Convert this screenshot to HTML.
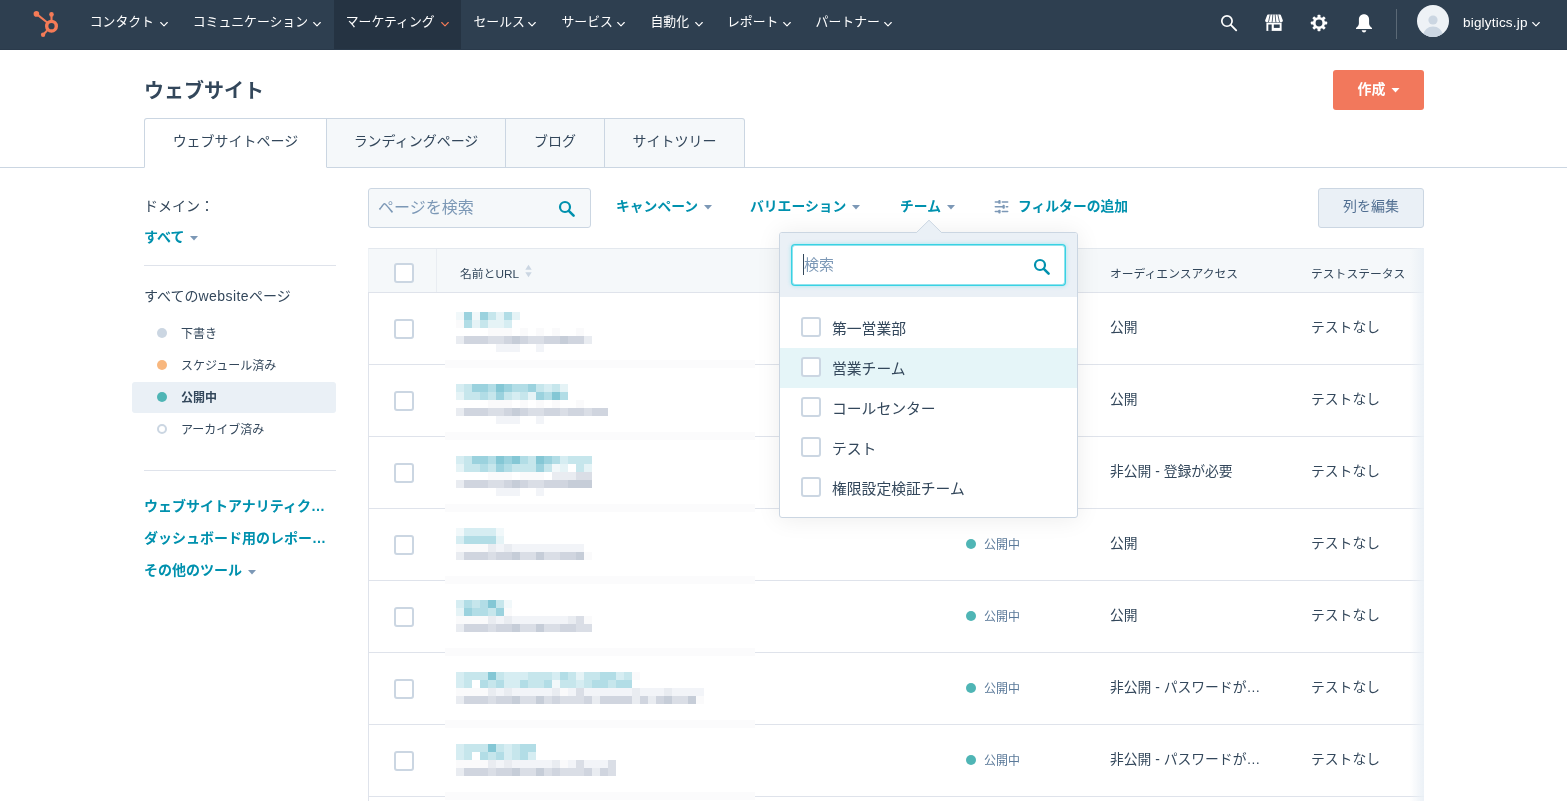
<!DOCTYPE html>
<html lang="ja">
<head>
<meta charset="utf-8">
<title>ウェブサイト</title>
<style>
*{box-sizing:border-box;margin:0;padding:0}
html,body{width:1567px;height:801px;overflow:hidden;background:#fff}
body{font-family:"Liberation Sans","Noto Sans CJK JP",sans-serif;color:#33475b;font-size:14px;position:relative}
#wrap{position:absolute;left:0;top:0;width:1567px;height:801px;will-change:transform}
.abs{position:absolute;white-space:nowrap}
#nav{position:absolute;left:0;top:0;width:1567px;height:50px;background:#2e3f50;border-bottom:1px solid #2a3a4b}
#nav .act{position:absolute;left:334px;top:0;width:127px;height:49px;background:#253342}
.ni{position:absolute;top:0;height:44px;line-height:44px;color:#fff;font-size:12.85px;font-weight:400;white-space:nowrap}
#tabline{position:absolute;left:0;top:167px;width:1567px;height:1px;background:#cbd6e2}
.tab{position:absolute;top:118px;height:50px;border:1px solid #cbd6e2;border-left:none;background:#f5f8fa;text-align:center;line-height:44.5px;font-size:14px;color:#33475b}
.tab.first{border-left:1px solid #cbd6e2;border-top-left-radius:3px;background:#fff;border-bottom-color:#fff}
.tab.last{border-top-right-radius:3px}
.teal{color:#0091ae;font-weight:bold}
.hr{position:absolute;left:144px;width:192px;height:1px;background:#dfe3eb}
.sit{position:absolute;left:181px;font-size:12px;line-height:20px;white-space:nowrap}
.dot{position:absolute;left:157px;width:10px;height:10px;border-radius:50%}
#thead{position:absolute;left:368px;top:248px;width:1056px;height:45px;background:#f5f8fa;border:1px solid #dfe3eb;border-top-color:#e3e8ee;border-left-color:#eef2f6;border-right:none}
.th{position:absolute;top:264.5px;font-size:11.8px;line-height:18px;white-space:nowrap;color:#33475b}
.rowline{position:absolute;left:368px;width:1056px;height:1px;background:#dfe3eb}
.cb{position:absolute;width:20px;height:20px;border:2px solid #cbd6e2;border-radius:3px;background:#fff}
.st{position:absolute;left:984px;font-size:12px;line-height:18px;color:#5a7999;white-space:nowrap}
.sd{position:absolute;left:966px;width:10px;height:10px;border-radius:50%;background:#4fb5b5}
.td{position:absolute;font-size:13.8px;line-height:20px;white-space:nowrap;color:#33475b}
.ms{position:absolute;left:456px;height:8px}
.band{position:absolute;left:445px;width:310px;height:8px;background:#fbfbfc}
#pop{position:absolute;left:779px;top:232px;width:299px;height:286px;background:#fff;border:1px solid #cbd6e2;border-radius:3px;box-shadow:0 1px 24px 0 rgba(0,0,0,.08)}
#pophead{position:absolute;left:0;top:0;width:297px;height:64px;background:#eaf0f6;border-radius:2px 2px 0 0}
.opt{position:absolute;left:832px;font-size:14.8px;line-height:24px;white-space:nowrap;color:#33475b}
</style>
</head>
<body>
<div id="wrap">
<div id="nav"><div class="act"></div>
<svg class="abs" style="left:30px;top:8px" width="32" height="32" viewBox="0 0 32 32"><g fill="none" stroke="#f57b57" stroke-width="2.1" stroke-linecap="round"><path d="M6.4 5.9 L16.6 14"/><path d="M21.5 6.4 L21.5 12"/><path d="M13.1 26.7 L17 22.6"/></g><circle cx="21.5" cy="18.2" r="4.8" fill="none" stroke="#f57b57" stroke-width="3.4"/><circle cx="6.4" cy="5.9" r="2.8" fill="#f57b57"/><circle cx="21.5" cy="6.4" r="2.3" fill="#f57b57"/><circle cx="13.1" cy="26.7" r="2.2" fill="#f57b57"/></svg>
<div class="ni" style="left:89.7px">コンタクト</div><svg class="abs" width="10" height="7" viewBox="0 0 10 7" style="left:158.5px;top:21px"><path d="M1.7 1.5 L5 4.8 L8.3 1.5" fill="none" stroke="#fff" stroke-width="1.1" stroke-linecap="round" stroke-linejoin="round"/></svg>
<div class="ni" style="left:192.7px">コミュニケーション</div><svg class="abs" width="10" height="7" viewBox="0 0 10 7" style="left:312px;top:21px"><path d="M1.7 1.5 L5 4.8 L8.3 1.5" fill="none" stroke="#fff" stroke-width="1.1" stroke-linecap="round" stroke-linejoin="round"/></svg>
<div class="ni" style="left:345.7px">マーケティング</div><svg class="abs" width="10" height="7" viewBox="0 0 10 7" style="left:439.7px;top:21px"><path d="M1.7 1.5 L5 4.8 L8.3 1.5" fill="none" stroke="#f57b57" stroke-width="1.1" stroke-linecap="round" stroke-linejoin="round"/></svg>
<div class="ni" style="left:473.5px">セールス</div><svg class="abs" width="10" height="7" viewBox="0 0 10 7" style="left:527px;top:21px"><path d="M1.7 1.5 L5 4.8 L8.3 1.5" fill="none" stroke="#fff" stroke-width="1.1" stroke-linecap="round" stroke-linejoin="round"/></svg>
<div class="ni" style="left:561.5px">サービス</div><svg class="abs" width="10" height="7" viewBox="0 0 10 7" style="left:615.7px;top:21px"><path d="M1.7 1.5 L5 4.8 L8.3 1.5" fill="none" stroke="#fff" stroke-width="1.1" stroke-linecap="round" stroke-linejoin="round"/></svg>
<div class="ni" style="left:650.5px">自動化</div><svg class="abs" width="10" height="7" viewBox="0 0 10 7" style="left:693.6px;top:21px"><path d="M1.7 1.5 L5 4.8 L8.3 1.5" fill="none" stroke="#fff" stroke-width="1.1" stroke-linecap="round" stroke-linejoin="round"/></svg>
<div class="ni" style="left:727px">レポート</div><svg class="abs" width="10" height="7" viewBox="0 0 10 7" style="left:781.6px;top:21px"><path d="M1.7 1.5 L5 4.8 L8.3 1.5" fill="none" stroke="#fff" stroke-width="1.1" stroke-linecap="round" stroke-linejoin="round"/></svg>
<div class="ni" style="left:815.6px">パートナー</div><svg class="abs" width="10" height="7" viewBox="0 0 10 7" style="left:883px;top:21px"><path d="M1.7 1.5 L5 4.8 L8.3 1.5" fill="none" stroke="#fff" stroke-width="1.1" stroke-linecap="round" stroke-linejoin="round"/></svg>
<svg class="abs" style="left:1220px;top:13px" width="20" height="20" viewBox="0 0 20 20"><circle cx="6.95" cy="8.1" r="5.15" fill="none" stroke="#fff" stroke-width="1.7"/><path d="M10.8 11.9 L16.2 17.3" stroke="#fff" stroke-width="1.9" stroke-linecap="round"/></svg>
<svg class="abs" style="left:1264px;top:13px" width="20" height="20" viewBox="0 0 20 20"><path d="M3.2 2 Q3.4 1.4 4 1.4 H16 Q16.6 1.4 16.8 2 L18.9 7.4 Q19 9.3 17.3 9.3 Q15.9 9.3 15.6 8.1 Q15.2 9.3 13.7 9.3 Q12.2 9.3 11.9 8.1 Q11.5 9.3 10 9.3 Q8.5 9.3 8.1 8.1 Q7.8 9.3 6.3 9.3 Q4.8 9.3 4.4 8.1 Q4.1 9.3 2.7 9.3 Q1 9.3 1.1 7.4 Z" fill="#fff"/><path d="M6.2 1.4 L4.7 8.3 M8.8 1.4 L8.3 8.3 M11.2 1.4 L11.7 8.3 M13.8 1.4 L15.3 8.3" stroke="#2e3f50" stroke-width="0.8"/><path d="M2.4 9.6 H17.6 V17.9 H2.4 Z" fill="#fff"/><rect x="4.3" y="11.5" width="3.4" height="6.4" fill="#2e3f50"/><rect x="9.8" y="11.5" width="5.9" height="3.4" fill="#2e3f50"/></svg>
<svg class="abs" style="left:1310px;top:14px" width="18" height="18" viewBox="0 0 20 20"><g fill="#fff"><rect x="8.35" y="0.9" width="3.3" height="4.2" rx="0.9" transform="rotate(0 10 10)"/><rect x="8.35" y="0.9" width="3.3" height="4.2" rx="0.9" transform="rotate(45 10 10)"/><rect x="8.35" y="0.9" width="3.3" height="4.2" rx="0.9" transform="rotate(90 10 10)"/><rect x="8.35" y="0.9" width="3.3" height="4.2" rx="0.9" transform="rotate(135 10 10)"/><rect x="8.35" y="0.9" width="3.3" height="4.2" rx="0.9" transform="rotate(180 10 10)"/><rect x="8.35" y="0.9" width="3.3" height="4.2" rx="0.9" transform="rotate(225 10 10)"/><rect x="8.35" y="0.9" width="3.3" height="4.2" rx="0.9" transform="rotate(270 10 10)"/><rect x="8.35" y="0.9" width="3.3" height="4.2" rx="0.9" transform="rotate(315 10 10)"/></g><circle cx="10" cy="10" r="5.3" fill="none" stroke="#fff" stroke-width="3"/></svg>
<svg class="abs" style="left:1354px;top:13px" width="20" height="20" viewBox="0 0 20 20"><path d="M10 1.3 C7 1.3 4.9 3.5 4.9 6.4 V10.6 C4.9 12.4 3.6 13.9 2 15 V16.1 H18 V15 C16.4 13.9 15.1 12.4 15.1 10.6 V6.4 C15.1 3.5 13 1.3 10 1.3 Z" fill="#fff"/><path d="M7.6 17.2 H12.4 Q11.8 19.5 10 19.5 Q8.2 19.5 7.6 17.2 Z" fill="#fff"/></svg>
<div class="abs" style="left:1396px;top:9px;width:1px;height:30px;background:#fff;opacity:.22"></div>
<svg class="abs" style="left:1417px;top:5px" width="32" height="32" viewBox="0 0 32 32"><defs><clipPath id="av"><circle cx="16" cy="16" r="16"/></clipPath></defs><circle cx="16" cy="16" r="16" fill="#eef2f6"/><g clip-path="url(#av)" fill="#cbd6e2"><circle cx="16" cy="15" r="4.6"/><ellipse cx="16" cy="30" rx="9.5" ry="8.5"/></g></svg>
<div class="ni" style="left:1463px;font-size:13.5px;letter-spacing:.2px;line-height:46px">biglytics.jp</div><svg class="abs" width="10" height="7" viewBox="0 0 10 7" style="left:1531px;top:21px"><path d="M1.7 1.5 L5 4.8 L8.3 1.5" fill="none" stroke="#fff" stroke-width="1.1" stroke-linecap="round" stroke-linejoin="round"/></svg>
</div>
<div class="abs" style="left:144px;top:74.5px;font-size:20px;line-height:32px;font-weight:bold;color:#33475b">ウェブサイト</div>
<div class="abs" style="left:1333px;top:70px;width:91px;height:40px;background:#f2785c;border-radius:3px;color:#fff;font-weight:bold;font-size:14px;line-height:38px;text-align:center">作成<svg width="9" height="5" viewBox="0 0 8 5" style="display:inline-block;vertical-align:middle;margin-left:5px;margin-top:1px"><path d="M0 0 H8 L4 4.5 Z" fill="#fff"/></svg></div>
<div id="tabline"></div>
<div class="tab first" style="left:144px;width:183px">ウェブサイトページ</div>
<div class="tab" style="left:327px;width:179px">ランディングページ</div>
<div class="tab" style="left:506px;width:99px">ブログ</div>
<div class="tab last" style="left:605px;width:140px">サイトツリー</div>
<div class="abs" style="left:144px;top:196px;font-size:14px;line-height:20px">ドメイン：</div>
<div class="abs teal" style="left:144px;top:226.5px;font-size:14px;line-height:20px">すべて<svg width="8" height="5" viewBox="0 0 8 5" style="display:inline-block;vertical-align:middle;margin-left:6px;margin-top:1px"><path d="M0 0 H8 L4 4.5 Z" fill="#7c98b6"/></svg></div>
<div class="hr" style="top:265px"></div>
<div class="abs" style="left:144px;top:286px;font-size:14px;line-height:20px">すべての<span style="letter-spacing:.45px">website</span>ページ</div>
<div class="abs" style="left:132px;top:382px;width:204px;height:31px;background:#eaf0f6;border-radius:3px"></div>
<div class="dot" style="top:328px;background:#cbd6e2"></div><div class="sit" style="top:324px">下書き</div>
<div class="dot" style="top:360px;background:#f8b77e"></div><div class="sit" style="top:356px">スケジュール済み</div>
<div class="dot" style="top:392px;background:#4fb5b5"></div><div class="sit" style="top:388px;font-weight:bold">公開中</div>
<div class="dot" style="top:424px;background:#fff;border:2px solid #cbd6e2"></div><div class="sit" style="top:420px">アーカイブ済み</div>
<div class="hr" style="top:470px"></div>
<div class="abs teal" style="left:144px;top:496.3px;font-size:14px;line-height:20px">ウェブサイトアナリティク…</div>
<div class="abs teal" style="left:144px;top:528.3px;font-size:14px;line-height:20px">ダッシュボード用のレポー…</div>
<div class="abs teal" style="left:144px;top:560.3px;font-size:14px;line-height:20px">その他のツール<svg width="8" height="5" viewBox="0 0 8 5" style="display:inline-block;vertical-align:middle;margin-left:6px;margin-top:1px"><path d="M0 0 H8 L4 4.5 Z" fill="#7c98b6"/></svg></div>
<div class="abs" style="left:368px;top:188px;width:223px;height:40px;background:#f5f8fa;border:1px solid #cbd6e2;border-radius:3px"></div>
<div class="abs" style="left:378px;top:196px;font-size:16px;line-height:24px;color:#7c98b6">ページを検索</div>
<svg class="abs" style="left:558px;top:200px" width="18" height="18" viewBox="0 0 18 18"><circle cx="7" cy="7" r="5" fill="none" stroke="#0091ae" stroke-width="2.2"/><path d="M10.8 10.8 L15.6 15.6" stroke="#0091ae" stroke-width="2.6" stroke-linecap="round"/></svg>
<div class="abs teal" style="left:616px;top:196.5px;font-size:13.8px;line-height:20px">キャンペーン<svg width="8" height="5" viewBox="0 0 8 5" style="display:inline-block;vertical-align:middle;margin-left:6px;margin-top:1px"><path d="M0 0 H8 L4 4.5 Z" fill="#7c98b6"/></svg></div>
<div class="abs teal" style="left:750px;top:196.5px;font-size:13.8px;line-height:20px">バリエーション<svg width="8" height="5" viewBox="0 0 8 5" style="display:inline-block;vertical-align:middle;margin-left:6px;margin-top:1px"><path d="M0 0 H8 L4 4.5 Z" fill="#7c98b6"/></svg></div>
<div class="abs teal" style="left:900px;top:196.5px;font-size:13.8px;line-height:20px">チーム<svg width="8" height="5" viewBox="0 0 8 5" style="display:inline-block;vertical-align:middle;margin-left:6px;margin-top:1px"><path d="M0 0 H8 L4 4.5 Z" fill="#7c98b6"/></svg></div>
<svg class="abs" style="left:993px;top:199px" width="16" height="16" viewBox="0 0 16 16"><g stroke="#7c98b6" stroke-width="1.5" fill="none" stroke-linecap="round"><path d="M2.3 2.9 H5.6 M9.3 2.9 H14.7 M2.3 7.75 H9.8 M13.3 7.75 H14.7 M2.3 12.6 H5.6 M9.3 12.6 H14.7"/></g><g fill="#7c98b6"><rect x="5.3" y="1" width="2.3" height="3.8" rx="0.9"/><rect x="9.5" y="5.85" width="2.3" height="3.8" rx="0.9"/><rect x="5.3" y="10.7" width="2.3" height="3.8" rx="0.9"/></g></svg>
<div class="abs teal" style="left:1018px;top:196.5px;font-size:13.8px;line-height:20px">フィルターの追加</div>
<div class="abs" style="left:1318px;top:188px;width:106px;height:40px;background:#eaf0f6;border:1px solid #cbd6e2;border-radius:3px;color:#506e91;font-size:14px;line-height:35px;text-align:center">列を編集</div>
<div id="thead"></div>
<div class="abs" style="left:436px;top:249px;width:1px;height:43px;background:#e9edf2"></div>
<div class="abs" style="left:368px;top:292px;width:1px;height:509px;background:#dfe3eb"></div>
<div class="cb" style="left:393.5px;top:263px"></div>
<div class="th" style="left:460px">名前とURL</div>
<svg class="abs" style="left:525px;top:264px" width="7" height="14" viewBox="0 0 7 14"><path d="M0.3 5.8 L3.5 0.8 L6.7 5.8 Z M0.3 8.2 L3.5 13.2 L6.7 8.2 Z" fill="#cbd6e2"/></svg>
<div class="th" style="left:1110px">オーディエンスアクセス</div><div class="th" style="left:1311px">テストステータス</div>
<div class="rowline" style="top:364px"></div>
<div class="cb" style="left:393.5px;top:319px"></div>
<div class="ms" style="top:312px;width:64px;background:linear-gradient(to right,#f1f8fa 0px 8px,#9bd2de 8px 16px,#f1f8fa 16px 24px,#9bd2de 24px 32px,#c6e6ec 32px 40px,#e5f3f6 40px 48px,#b2dde6 48px 56px,#e5f3f6 56px 64px)"></div>
<div class="ms" style="top:320px;width:56px;background:linear-gradient(to right,#fafafb 0px 8px,#b2dde6 8px 16px,#e5f3f6 16px 24px,#c6e6ec 24px 32px,#e5f3f6 32px 40px,#e5f3f6 40px 48px,#d6edf2 48px 56px)"></div>
<div class="ms" style="top:328px;width:128px;background:linear-gradient(to right,transparent 0px 8px,transparent 8px 16px,transparent 16px 24px,transparent 24px 32px,#fafafb 32px 40px,#fafafb 40px 48px,#fafafb 48px 56px,transparent 56px 64px,#fafafb 64px 72px,transparent 72px 80px,#fafafb 80px 88px,transparent 88px 96px,#fafafb 96px 104px,transparent 104px 112px,transparent 112px 120px,#fafafb 120px 128px)"></div>
<div class="ms" style="top:336px;width:136px;background:linear-gradient(to right,#e9ecf1 0px 8px,#d0d5df 8px 16px,#d0d5df 16px 24px,#d0d5df 24px 32px,#dadee6 32px 40px,#dadee6 40px 48px,#d0d5df 48px 56px,#c6cdd8 56px 64px,#d0d5df 64px 72px,#dadee6 72px 80px,#dadee6 80px 88px,#d0d5df 88px 96px,#d0d5df 96px 104px,#c6cdd8 104px 112px,#d0d5df 112px 120px,#d0d5df 120px 128px,#e9ecf1 128px 136px)"></div>
<div class="ms" style="top:344px;width:88px;background:linear-gradient(to right,transparent 0px 8px,transparent 8px 16px,transparent 16px 24px,transparent 24px 32px,transparent 32px 40px,#f2f4f8 40px 48px,#f2f4f8 48px 56px,#f2f4f8 56px 64px,transparent 64px 72px,transparent 72px 80px,#f2f4f8 80px 88px)"></div>
<div class="band" style="top:360px"></div>
<div class="sd" style="top:323px"></div><div class="st" style="top:320px">公開中</div>
<div class="td" style="left:1110px;top:318px">公開</div><div class="td" style="left:1311px;top:318px">テストなし</div>
<div class="rowline" style="top:436px"></div>
<div class="cb" style="left:393.5px;top:391px"></div>
<div class="ms" style="top:384px;width:112px;background:linear-gradient(to right,#d6edf2 0px 8px,#c6e6ec 8px 16px,#9bd2de 16px 24px,#9bd2de 24px 32px,#b2dde6 32px 40px,#84c7d5 40px 48px,#9bd2de 48px 56px,#b2dde6 56px 64px,#b2dde6 64px 72px,#9bd2de 72px 80px,#c6e6ec 80px 88px,#d6edf2 88px 96px,#c6e6ec 96px 104px,#e5f3f6 104px 112px)"></div>
<div class="ms" style="top:392px;width:112px;background:linear-gradient(to right,#e5f3f6 0px 8px,#c6e6ec 8px 16px,#c6e6ec 16px 24px,#b2dde6 24px 32px,#c6e6ec 32px 40px,#9bd2de 40px 48px,#c6e6ec 48px 56px,#d6edf2 56px 64px,#c6e6ec 64px 72px,#e5f3f6 72px 80px,#9bd2de 80px 88px,#b2dde6 88px 96px,#84c7d5 96px 104px,#b2dde6 104px 112px)"></div>
<div class="ms" style="top:400px;width:128px;background:linear-gradient(to right,transparent 0px 8px,transparent 8px 16px,transparent 16px 24px,transparent 24px 32px,#fafafb 32px 40px,#fafafb 40px 48px,#fafafb 48px 56px,transparent 56px 64px,#fafafb 64px 72px,transparent 72px 80px,#fafafb 80px 88px,transparent 88px 96px,#fafafb 96px 104px,transparent 104px 112px,transparent 112px 120px,#fafafb 120px 128px)"></div>
<div class="ms" style="top:408px;width:152px;background:linear-gradient(to right,#e9ecf1 0px 8px,#d0d5df 8px 16px,#d0d5df 16px 24px,#d0d5df 24px 32px,#dadee6 32px 40px,#dadee6 40px 48px,#d0d5df 48px 56px,#c6cdd8 56px 64px,#d0d5df 64px 72px,#dadee6 72px 80px,#dadee6 80px 88px,#d0d5df 88px 96px,#d0d5df 96px 104px,#dadee6 104px 112px,#d0d5df 112px 120px,#d0d5df 120px 128px,#dadee6 128px 136px,#d0d5df 136px 144px,#d0d5df 144px 152px)"></div>
<div class="ms" style="top:416px;width:88px;background:linear-gradient(to right,transparent 0px 8px,transparent 8px 16px,transparent 16px 24px,transparent 24px 32px,transparent 32px 40px,#f2f4f8 40px 48px,#f2f4f8 48px 56px,#f2f4f8 56px 64px,transparent 64px 72px,transparent 72px 80px,#f2f4f8 80px 88px)"></div>
<div class="band" style="top:432px"></div>
<div class="sd" style="top:395px"></div><div class="st" style="top:392px">公開中</div>
<div class="td" style="left:1110px;top:390px">公開</div><div class="td" style="left:1311px;top:390px">テストなし</div>
<div class="rowline" style="top:508px"></div>
<div class="cb" style="left:393.5px;top:463px"></div>
<div class="ms" style="top:456px;width:136px;background:linear-gradient(to right,#d6edf2 0px 8px,#c6e6ec 8px 16px,#9bd2de 16px 24px,#9bd2de 24px 32px,#b2dde6 32px 40px,#84c7d5 40px 48px,#9bd2de 48px 56px,#84c7d5 56px 64px,#b2dde6 64px 72px,#c6e6ec 72px 80px,#84c7d5 80px 88px,#9bd2de 88px 96px,#b2dde6 96px 104px,#d6edf2 104px 112px,#c6e6ec 112px 120px,#c6e6ec 120px 128px,#c6e6ec 128px 136px)"></div>
<div class="ms" style="top:464px;width:136px;background:linear-gradient(to right,#e5f3f6 0px 8px,#c6e6ec 8px 16px,#c6e6ec 16px 24px,#b2dde6 24px 32px,#c6e6ec 32px 40px,#9bd2de 40px 48px,#b2dde6 48px 56px,#c6e6ec 56px 64px,#c6e6ec 64px 72px,#c6e6ec 72px 80px,#9bd2de 80px 88px,#c6e6ec 88px 96px,#f1f8fa 96px 104px,#e5f3f6 104px 112px,transparent 112px 120px,#c6e6ec 120px 128px,#e5f3f6 128px 136px)"></div>
<div class="ms" style="top:472px;width:136px;background:linear-gradient(to right,transparent 0px 8px,transparent 8px 16px,transparent 16px 24px,transparent 24px 32px,#fafafb 32px 40px,#fafafb 40px 48px,#fafafb 48px 56px,transparent 56px 64px,#fafafb 64px 72px,#fafafb 72px 80px,#fafafb 80px 88px,transparent 88px 96px,#e9ecf1 96px 104px,#e9ecf1 104px 112px,#e9ecf1 112px 120px,#dadee6 120px 128px,#dadee6 128px 136px)"></div>
<div class="ms" style="top:480px;width:136px;background:linear-gradient(to right,#e9ecf1 0px 8px,#d0d5df 8px 16px,#d0d5df 16px 24px,#d0d5df 24px 32px,#dadee6 32px 40px,#dadee6 40px 48px,#d0d5df 48px 56px,#c6cdd8 56px 64px,#d0d5df 64px 72px,#dadee6 72px 80px,#dadee6 80px 88px,#d0d5df 88px 96px,#d0d5df 96px 104px,#d0d5df 104px 112px,#c6cdd8 112px 120px,#c6cdd8 120px 128px,#c6cdd8 128px 136px)"></div>
<div class="ms" style="top:488px;width:88px;background:linear-gradient(to right,transparent 0px 8px,transparent 8px 16px,transparent 16px 24px,transparent 24px 32px,transparent 32px 40px,#f2f4f8 40px 48px,#f2f4f8 48px 56px,#f2f4f8 56px 64px,transparent 64px 72px,transparent 72px 80px,#f2f4f8 80px 88px)"></div>
<div class="band" style="top:504px"></div>
<div class="sd" style="top:467px"></div><div class="st" style="top:464px">公開中</div>
<div class="td" style="left:1110px;top:462px">非公開 - 登録が必要</div><div class="td" style="left:1311px;top:462px">テストなし</div>
<div class="rowline" style="top:580px"></div>
<div class="cb" style="left:393.5px;top:535px"></div>
<div class="ms" style="top:528px;width:48px;background:linear-gradient(to right,#f1f8fa 0px 8px,#d6edf2 8px 16px,#d6edf2 16px 24px,#d6edf2 24px 32px,#d6edf2 32px 40px,#f1f8fa 40px 48px)"></div>
<div class="ms" style="top:536px;width:48px;background:linear-gradient(to right,#d6edf2 0px 8px,#b2dde6 8px 16px,#b2dde6 16px 24px,#b2dde6 24px 32px,#b2dde6 32px 40px,#e5f3f6 40px 48px)"></div>
<div class="ms" style="top:544px;width:128px;background:linear-gradient(to right,#fafafb 0px 8px,#fafafb 8px 16px,#fafafb 16px 24px,#fafafb 24px 32px,#e9ecf1 32px 40px,#f2f4f8 40px 48px,#e9ecf1 48px 56px,#f2f4f8 56px 64px,#f2f4f8 64px 72px,#f2f4f8 72px 80px,#f2f4f8 80px 88px,#f2f4f8 88px 96px,#f2f4f8 96px 104px,#f2f4f8 104px 112px,#f2f4f8 112px 120px,#f2f4f8 120px 128px)"></div>
<div class="ms" style="top:552px;width:136px;background:linear-gradient(to right,#e9ecf1 0px 8px,#d0d5df 8px 16px,#d0d5df 16px 24px,#d0d5df 24px 32px,#dadee6 32px 40px,#d0d5df 40px 48px,#d0d5df 48px 56px,#c6cdd8 56px 64px,#dadee6 64px 72px,#dadee6 72px 80px,#c6cdd8 80px 88px,#dadee6 88px 96px,#dadee6 96px 104px,#d0d5df 104px 112px,#d0d5df 112px 120px,#c6cdd8 120px 128px,#fafafb 128px 136px)"></div>

<div class="band" style="top:576px"></div>
<div class="sd" style="top:539px"></div><div class="st" style="top:536px">公開中</div>
<div class="td" style="left:1110px;top:534px">公開</div><div class="td" style="left:1311px;top:534px">テストなし</div>
<div class="rowline" style="top:652px"></div>
<div class="cb" style="left:393.5px;top:607px"></div>
<div class="ms" style="top:600px;width:56px;background:linear-gradient(to right,#d6edf2 0px 8px,#b2dde6 8px 16px,#c6e6ec 16px 24px,#b2dde6 24px 32px,#84c7d5 32px 40px,#c6e6ec 40px 48px,#f1f8fa 48px 56px)"></div>
<div class="ms" style="top:608px;width:56px;background:linear-gradient(to right,#e5f3f6 0px 8px,#9bd2de 8px 16px,#b2dde6 16px 24px,#b2dde6 24px 32px,#c6e6ec 32px 40px,#9bd2de 40px 48px,#fafafb 48px 56px)"></div>
<div class="ms" style="top:616px;width:136px;background:linear-gradient(to right,#fafafb 0px 8px,#fafafb 8px 16px,#fafafb 16px 24px,#fafafb 24px 32px,#e9ecf1 32px 40px,#f2f4f8 40px 48px,#e9ecf1 48px 56px,#f2f4f8 56px 64px,#f2f4f8 64px 72px,#f2f4f8 72px 80px,#f2f4f8 80px 88px,#f2f4f8 88px 96px,#f2f4f8 96px 104px,#f2f4f8 104px 112px,#e9ecf1 112px 120px,#dadee6 120px 128px,#fafafb 128px 136px)"></div>
<div class="ms" style="top:624px;width:136px;background:linear-gradient(to right,#e9ecf1 0px 8px,#d0d5df 8px 16px,#d0d5df 16px 24px,#d0d5df 24px 32px,#dadee6 32px 40px,#d0d5df 40px 48px,#d0d5df 48px 56px,#c6cdd8 56px 64px,#dadee6 64px 72px,#dadee6 72px 80px,#c6cdd8 80px 88px,#dadee6 88px 96px,#dadee6 96px 104px,#d0d5df 104px 112px,#d0d5df 112px 120px,#dadee6 120px 128px,#dadee6 128px 136px)"></div>

<div class="band" style="top:648px"></div>
<div class="sd" style="top:611px"></div><div class="st" style="top:608px">公開中</div>
<div class="td" style="left:1110px;top:606px">公開</div><div class="td" style="left:1311px;top:606px">テストなし</div>
<div class="rowline" style="top:724px"></div>
<div class="cb" style="left:393.5px;top:679px"></div>
<div class="ms" style="top:672px;width:184px;background:linear-gradient(to right,#d6edf2 0px 8px,#c6e6ec 8px 16px,#c6e6ec 16px 24px,#c6e6ec 24px 32px,#84c7d5 32px 40px,#c6e6ec 40px 48px,#d6edf2 48px 56px,#d6edf2 56px 64px,#d6edf2 64px 72px,#c6e6ec 72px 80px,#c6e6ec 80px 88px,#c6e6ec 88px 96px,#d6edf2 96px 104px,#b2dde6 104px 112px,#c6e6ec 112px 120px,#e5f3f6 120px 128px,#c6e6ec 128px 136px,#c6e6ec 136px 144px,#b2dde6 144px 152px,#b2dde6 152px 160px,#d6edf2 160px 168px,#c6e6ec 168px 176px,#fafafb 176px 184px)"></div>
<div class="ms" style="top:680px;width:176px;background:linear-gradient(to right,#d6edf2 0px 8px,#c6e6ec 8px 16px,transparent 16px 24px,#b2dde6 24px 32px,#c6e6ec 32px 40px,#b2dde6 40px 48px,#d6edf2 48px 56px,#d6edf2 56px 64px,#b2dde6 64px 72px,#c6e6ec 72px 80px,#c6e6ec 80px 88px,#b2dde6 88px 96px,#f1f8fa 96px 104px,#c6e6ec 104px 112px,#c6e6ec 112px 120px,#d6edf2 120px 128px,#c6e6ec 128px 136px,#b2dde6 136px 144px,#b2dde6 144px 152px,#c6e6ec 152px 160px,#b2dde6 160px 168px,#b2dde6 168px 176px)"></div>
<div class="ms" style="top:688px;width:248px;background:linear-gradient(to right,#fafafb 0px 8px,#fafafb 8px 16px,#fafafb 16px 24px,#fafafb 24px 32px,#e9ecf1 32px 40px,#f2f4f8 40px 48px,#e9ecf1 48px 56px,#f2f4f8 56px 64px,#f2f4f8 64px 72px,#f2f4f8 72px 80px,#f2f4f8 80px 88px,#f2f4f8 88px 96px,#e9ecf1 96px 104px,#fafafb 104px 112px,#f2f4f8 112px 120px,#dadee6 120px 128px,#f2f4f8 128px 136px,#f2f4f8 136px 144px,#f2f4f8 144px 152px,#f2f4f8 152px 160px,#f2f4f8 160px 168px,#f2f4f8 168px 176px,#e9ecf1 176px 184px,#f2f4f8 184px 192px,#f2f4f8 192px 200px,#f2f4f8 200px 208px,#e9ecf1 208px 216px,#f2f4f8 216px 224px,#f2f4f8 224px 232px,#f2f4f8 232px 240px,#f2f4f8 240px 248px)"></div>
<div class="ms" style="top:696px;width:248px;background:linear-gradient(to right,#e9ecf1 0px 8px,#d0d5df 8px 16px,#d0d5df 16px 24px,#d0d5df 24px 32px,#dadee6 32px 40px,#d0d5df 40px 48px,#d0d5df 48px 56px,#c6cdd8 56px 64px,#dadee6 64px 72px,#dadee6 72px 80px,#c6cdd8 80px 88px,#dadee6 88px 96px,#d0d5df 96px 104px,#dadee6 104px 112px,#dadee6 112px 120px,#dadee6 120px 128px,#d0d5df 128px 136px,#e9ecf1 136px 144px,#d0d5df 144px 152px,#d0d5df 152px 160px,#d0d5df 160px 168px,#d0d5df 168px 176px,#e9ecf1 176px 184px,#d0d5df 184px 192px,#e9ecf1 192px 200px,#d0d5df 200px 208px,#c6cdd8 208px 216px,#dadee6 216px 224px,#dadee6 224px 232px,#c6cdd8 232px 240px,#fafafb 240px 248px)"></div>

<div class="band" style="top:720px"></div>
<div class="sd" style="top:683px"></div><div class="st" style="top:680px">公開中</div>
<div class="td" style="left:1110px;top:678px">非公開 - パスワードが…</div><div class="td" style="left:1311px;top:678px">テストなし</div>
<div class="rowline" style="top:796px"></div>
<div class="cb" style="left:393.5px;top:751px"></div>
<div class="ms" style="top:744px;width:80px;background:linear-gradient(to right,#d6edf2 0px 8px,#c6e6ec 8px 16px,#c6e6ec 16px 24px,#c6e6ec 24px 32px,#84c7d5 32px 40px,#c6e6ec 40px 48px,#d6edf2 48px 56px,#c6e6ec 56px 64px,#b2dde6 64px 72px,#b2dde6 72px 80px)"></div>
<div class="ms" style="top:752px;width:80px;background:linear-gradient(to right,#d6edf2 0px 8px,#c6e6ec 8px 16px,transparent 16px 24px,#b2dde6 24px 32px,#c6e6ec 32px 40px,#b2dde6 40px 48px,#d6edf2 48px 56px,#c6e6ec 56px 64px,#b2dde6 64px 72px,#d6edf2 72px 80px)"></div>
<div class="ms" style="top:760px;width:160px;background:linear-gradient(to right,#fafafb 0px 8px,#fafafb 8px 16px,#fafafb 16px 24px,#fafafb 24px 32px,#e9ecf1 32px 40px,#f2f4f8 40px 48px,#e9ecf1 48px 56px,#f2f4f8 56px 64px,#f2f4f8 64px 72px,#f2f4f8 72px 80px,#f2f4f8 80px 88px,#f2f4f8 88px 96px,#e9ecf1 96px 104px,#fafafb 104px 112px,#f2f4f8 112px 120px,#dadee6 120px 128px,#f2f4f8 128px 136px,#f2f4f8 136px 144px,#f2f4f8 144px 152px,#dadee6 152px 160px)"></div>
<div class="ms" style="top:768px;width:160px;background:linear-gradient(to right,#e9ecf1 0px 8px,#d0d5df 8px 16px,#d0d5df 16px 24px,#d0d5df 24px 32px,#dadee6 32px 40px,#d0d5df 40px 48px,#d0d5df 48px 56px,#c6cdd8 56px 64px,#dadee6 64px 72px,#dadee6 72px 80px,#c6cdd8 80px 88px,#dadee6 88px 96px,#d0d5df 96px 104px,#dadee6 104px 112px,#dadee6 112px 120px,#dadee6 120px 128px,#d0d5df 128px 136px,#e9ecf1 136px 144px,#d0d5df 144px 152px,#dadee6 152px 160px)"></div>

<div class="band" style="top:792px"></div>
<div class="sd" style="top:755px"></div><div class="st" style="top:752px">公開中</div>
<div class="td" style="left:1110px;top:750px">非公開 - パスワードが…</div><div class="td" style="left:1311px;top:750px">テストなし</div>
<div class="abs" style="left:1410px;top:248px;width:14px;height:553px;background:linear-gradient(to right,rgba(234,240,246,0),rgba(234,240,246,.95))"></div>
<div id="pop"><div id="pophead"></div></div>
<svg class="abs" style="left:915px;top:219px" width="28" height="15" viewBox="0 0 28 15"><path d="M1 14 L14 1.2 L27 14" fill="#eaf0f6" stroke="#cbd6e2" stroke-width="1"/><path d="M1.5 14.5 H26.5" stroke="#eaf0f6" stroke-width="1.5"/></svg>
<div class="abs" style="left:792px;top:245px;width:273px;height:40px;background:#fff;border:1px solid #8fe3ee;border-radius:3px;box-shadow:0 0 4px 1px rgba(0,208,228,.3),0 0 0 1px #45d2e3"></div>
<div class="abs" style="left:803px;top:254px;width:1px;height:21px;background:#33475b"></div>
<div class="abs" style="left:804px;top:253px;font-size:15px;line-height:24px;color:#7c98b6">検索</div>
<svg class="abs" style="left:1033px;top:257.6px" width="18" height="18" viewBox="0 0 18 18"><circle cx="7" cy="7" r="5" fill="none" stroke="#0091ae" stroke-width="2.2"/><path d="M10.8 10.8 L15.6 15.6" stroke="#0091ae" stroke-width="2.6" stroke-linecap="round"/></svg>
<div class="abs" style="left:780px;top:348px;width:297px;height:40px;background:#e5f5f8"></div>
<div class="cb" style="left:801px;top:316.5px"></div><div class="opt" style="top:317px">第一営業部</div>
<div class="cb" style="left:801px;top:356.5px"></div><div class="opt" style="top:357px">営業チーム</div>
<div class="cb" style="left:801px;top:396.5px"></div><div class="opt" style="top:397px">コールセンター</div>
<div class="cb" style="left:801px;top:436.5px"></div><div class="opt" style="top:437px">テスト</div>
<div class="cb" style="left:801px;top:476.5px"></div><div class="opt" style="top:477px">権限設定検証チーム</div>
</div>
</body>
</html>
